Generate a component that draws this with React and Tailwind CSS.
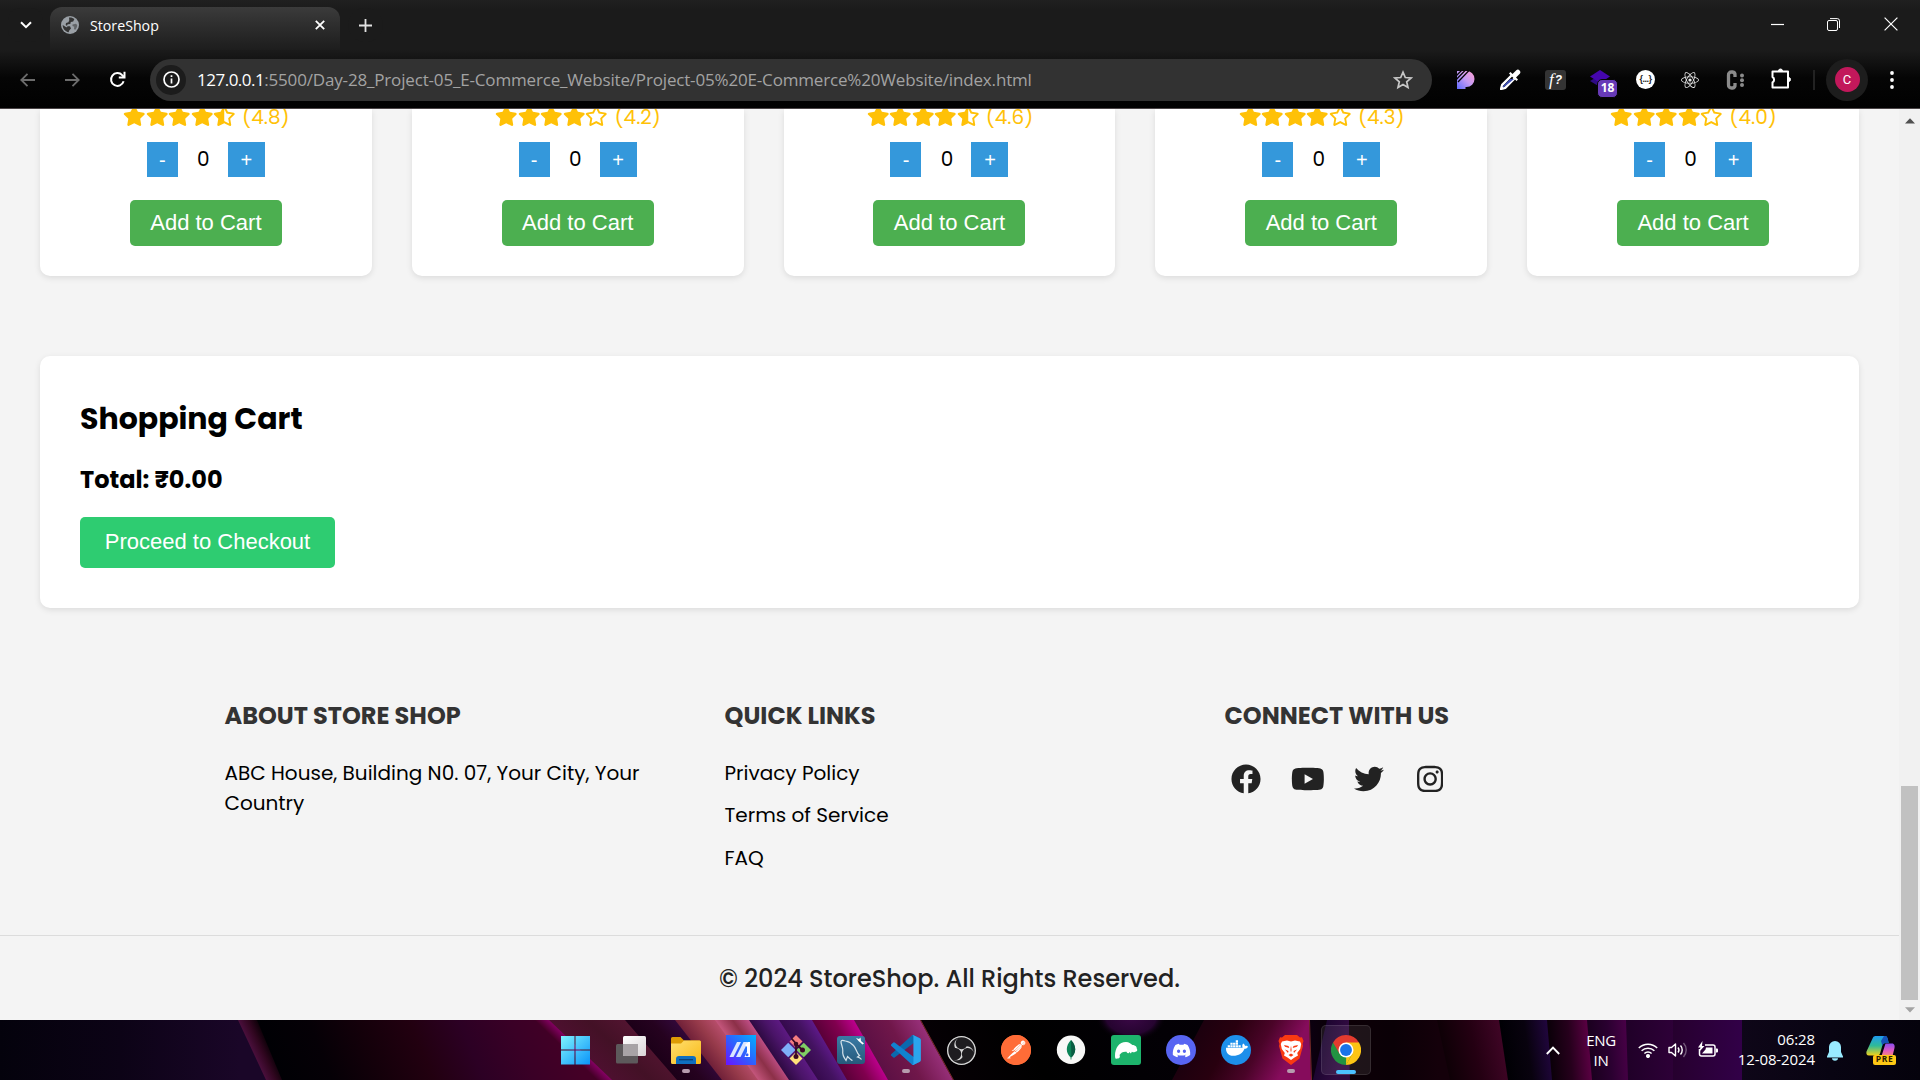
import React from "react";
import {
  FaStar,
  FaStarHalfAlt,
  FaRegStar,
  FaFacebook,
  FaYoutube,
  FaTwitter,
  FaInstagram,
  FaDiscord,
  FaDocker,
  FaReact,
} from "react-icons/fa";
import { SiPostman, SiObsstudio } from "react-icons/si";

/* ---------------------------------------------------------------- browser */

function TabStrip() {
  return (
    <div className="flex h-[50px] items-start pl-2">
      <div className="mt-2 flex h-[34px] w-[35px] items-center justify-center rounded-[12px] bg-[#1b1b1b]">
        <svg width="12" height="8" viewBox="0 0 12 8" fill="none" stroke="#fff" strokeWidth="2">
          <path d="M1 1.2l5 5 5-5" />
        </svg>
      </div>
      <div className="ml-[7px] mt-[7px] flex h-[43px] w-[290px] items-center rounded-t-[12px] bg-gradient-to-b from-[#3b3b3b] to-[#1d1d1d] pb-[7px] pl-[11px] pr-[15px]">
        <svg width="18" height="18" viewBox="0 0 18 18">
          <circle cx="9" cy="9" r="9" fill="#9aa0a6" />
          <path
            d="M8 1.6c2-.3 4 .3 5.400 1.500l-1.200 2.400-2.400.6-.5 2 -2.600.2-.9 1.700 3.200.3 1 2.200-1.800 1.900-.5 1.900C4 15.500 1.700 12.600 1.700 9l3.600 2.200 1.300-.2L4.600 8.600l.5-1.700 2.300-.7.9-2z"
            fill="#343434"
          />
          <path d="M11.500 8.400l3.400-.7 1.300 1.300c0 2-.8 3.800-2.200 5.100l-1-1.300.3-2-1.800-.8z" fill="#343434" opacity=".55" />
        </svg>
        <span className="ml-[11px] flex-1 whitespace-nowrap pt-px text-[14.200px] leading-5 text-white">StoreShop</span>
        <svg width="10" height="10" viewBox="0 0 10 10" stroke="#fff" strokeWidth="1.8">
          <path d="M.8.8l8.400 8.400M9.200.8L.8 9.200" />
        </svg>
      </div>
      <div className="ml-[8px] mt-2 flex h-[34px] w-[35px] items-center justify-center rounded-full bg-[#1b1b1b]">
        <svg width="13" height="13" viewBox="0 0 13 13" stroke="#e3e3e3" strokeWidth="1.800">
          <path d="M6.500 0v13M0 6.500h13" />
        </svg>
      </div>
      <div className="ml-auto mr-[22px] flex h-12 items-center gap-[43px]">
        <svg width="14" height="14" viewBox="0 0 14 14" stroke="#fff" strokeWidth="1.200">
          <path d="M0 7.500h13" />
        </svg>
        <svg className="-ml-px" width="13" height="13" viewBox="0 0 13 13" fill="none" stroke="#fff">
          <rect x=".5" y="2.500" width="10" height="10" rx="1.500" />
          <path d="M3 .6h7.300a2.200 2.200 0 0 1 2.200 2.200V10" />
        </svg>
        <svg className="ml-px" width="14" height="14" viewBox="0 0 14 14" stroke="#fff" strokeWidth="1.200">
          <path d="M.6.6l12.800 12.800M13.400.6L.6 13.400" />
        </svg>
      </div>
    </div>
  );
}

function Extensions() {
  return (
    <div className="flex items-center">
      <svg className="ml-[25px]" width="18" height="18" viewBox="0 0 18 18">
        <defs>
          <linearGradient id="pp" x1="1" y1="0" x2="0" y2="1">
            <stop offset="0" stopColor="#ff9fd0" />
            <stop offset=".5" stopColor="#c39af5" />
            <stop offset="1" stopColor="#5f6bff" />
          </linearGradient>
        </defs>
        <path d="M0 0h9.500a8 8 0 0 1 0 16H8.500v2H0z" fill="url(#pp)" />
        <path d="M-.5 4.500L5 -1M-.5 8.300L8.500 -1M1 11L12 -.5" stroke="#050505" strokeWidth="1.300" />
      </svg>
      <svg className="ml-[25px]" width="21" height="21" viewBox="0 0 21 21">
        <path d="M11.500 6.500L2.200 15.800 1 20l4.200-1.200 9.300-9.300" fill="none" stroke="#fff" strokeWidth="2.400" strokeLinejoin="round" />
        <path d="M3.500 18.500l-1-1L10 10h4z" fill="#3f51b5" />
        <path d="M9 4.500l7.500 7.500 1.500-1.500-2-2 3.800-3.800a2.500 2.500 0 0 0-3.500-3.500L12.500 5l-2-2z" fill="#fff" />
      </svg>
      <div className="ml-[24px] flex h-5 w-[21px] items-center justify-center rounded-[3px] bg-[#343434] font-['Liberation_Serif',serif] text-[17px] italic leading-5 text-white">
        <span>f</span>
        <span className="ml-px font-['Liberation_Sans',sans-serif] text-[12px] font-bold">?</span>
      </div>
      <div className="relative ml-[24px] h-[30px] w-[28px]">
        <svg className="mt-[5px]" width="20" height="17" viewBox="0 0 20 17">
          <path d="M10 5l10 6-10 6-10-6z" fill="#2f0a86" />
          <path d="M10 0l10 6.500L10 13 0 6.500z" fill="#4506ad" />
        </svg>
        <span className="absolute left-[7px] top-[14px] flex h-[19px] w-[21px] items-center justify-center rounded-[5px] border border-[#050505] bg-[#673ab7] text-[12px] font-bold leading-none text-white">
          18
        </span>
      </div>
      <div className="ml-[18px] flex h-[19px] w-[19px] items-center justify-center rounded-full bg-white">
        <span className="font-['Liberation_Sans',sans-serif] text-[9px] font-bold leading-none tracking-[-0.500px] text-[#222]">{"{...}"}</span>
      </div>
      <FaReact className="ml-[26px] h-[18px] w-[18px] text-[#e8e8e8]" />
      <svg className="ml-[27px]" width="19" height="20" viewBox="0 0 19 20">
        <path d="M9 7V5.200A3 3 0 0 0 6.500 2h-1A3 3 0 0 0 2.500 5.200v9.600A3 3 0 0 0 5.500 18h1A3 3 0 0 0 9 14.800V13" fill="none" stroke="#8b8b8b" strokeWidth="3.300" />
        <g fill="#8b8b8b">
          <circle cx="16" cy="5.500" r="2" />
          <circle cx="16" cy="10.300" r="2" />
          <circle cx="16" cy="15" r="2" />
        </g>
      </svg>
      <svg className="-mt-[2px] ml-[26px]" width="21" height="21" viewBox="0 0 21 21" fill="none" stroke="#fff" strokeWidth="2" strokeLinejoin="round">
        <path d="M1.500 3.500h15.500v16H1.500v-5.200a3 3 0 0 0 0-5.300z" />
        <path d="M7.500 3a2 2 0 0 1 4 0zM17.500 9.500a2 2 0 0 1 0 4z" fill="#fff" strokeWidth="1" />
      </svg>
      <div className="ml-[21px] h-5 w-[2px] bg-[#222]" />
      <div className="ml-[11px] flex h-[42px] w-[42px] items-center justify-center rounded-full bg-[#1d1d1d]">
        <div className="flex h-[25px] w-[25px] items-center justify-center rounded-full bg-[#c2185b] font-[Roboto,sans-serif] text-[13px] leading-none text-white">
          C
        </div>
      </div>
      <svg className="ml-[22px]" width="4" height="18" viewBox="0 0 4 18" fill="#fff">
        <circle cx="2" cy="2" r="1.900" />
        <circle cx="2" cy="9" r="1.900" />
        <circle cx="2" cy="16" r="1.900" />
      </svg>
    </div>
  );
}

function Toolbar() {
  return (
    <div className="flex h-[58px] items-center border-b border-[#4a4446] pl-5">
      <svg width="15" height="14" viewBox="0 0 15 14" fill="none" stroke="#6c6c6c" strokeWidth="1.800">
        <path d="M15 7H1.500M7.500.8L1.300 7l6.200 6.200" />
      </svg>
      <svg className="ml-[30px]" width="15" height="14" viewBox="0 0 15 14" fill="none" stroke="#6c6c6c" strokeWidth="1.800">
        <path d="M0 7h13.500M7.500.8L13.700 7l-6.200 6.200" />
      </svg>
      <svg className="ml-[29px]" width="17" height="17" viewBox="0 0 17 17" fill="none" stroke="#fff" strokeWidth="2">
        <path d="M14.600 10.300A6.400 6.400 0 1 1 13.200 4.200L15 6" />
        <path d="M15.500.8v5.700H9.800" />
      </svg>
      <div className="ml-[24px] flex h-[42px] w-[1282px] items-center rounded-full bg-[#323232] pl-[6px] pr-[19px]">
        <div className="flex h-[30px] w-[30px] items-center justify-center rounded-full bg-[#1c1c1c]">
          <svg width="17" height="17" viewBox="0 0 17 17" fill="none" stroke="#fff" strokeWidth="1.700">
            <circle cx="8.500" cy="8.500" r="7.500" />
            <path d="M8.500 7.500v5M8.500 4.300v1.800" />
          </svg>
        </div>
        <div className="ml-[11px] flex-1 whitespace-nowrap text-[17px] leading-6 tracking-[-0.168px] text-[#a3a3a3]">
          <span className="tracking-[-0.500px] text-white">127.0.0.1</span>
          :5500/Day-28_Project-05_E-Commerce_Website/Project-05%20E-Commerce%20Website/index.html
        </div>
        <svg width="20" height="20" viewBox="0 0 20 20" fill="none" stroke="#c7c7c7" strokeWidth="1.700">
          <path d="M10 2.200l2.300 5.300 5.800.5-4.400 3.800 1.300 5.700-5-3-5 3 1.300-5.700L1.900 8l5.800-.5z" />
        </svg>
      </div>
      <Extensions />
    </div>
  );
}

/* ------------------------------------------------------------------- page */

const products = [
  { rating: "4.8", half: true },
  { rating: "4.2", half: false },
  { rating: "4.6", half: true },
  { rating: "4.3", half: false },
  { rating: "4.0", half: false },
];

const star = "h-5 w-[22.500px]";
const qtyButton = "h-[35px] bg-[#3498db] font-['Liberation_Sans',Arial,sans-serif] text-[20px] leading-none text-white";

function ProductCard({ rating, half }) {
  const Last = half ? FaStarHalfAlt : FaRegStar;
  return (
    <div className="flex flex-1 flex-col items-center rounded-b-[10px] bg-white pb-[30px] shadow-[0_2px_6px_rgba(0,0,0,0.100)]">
      <div className="-mt-[8px] flex h-[30px] items-center pl-px text-[20px] leading-[30px] text-[#ffc107]">
        <FaStar className={star} />
        <FaStar className={star} />
        <FaStar className={star} />
        <FaStar className={star} />
        <Last className={star} />
        <span className="ml-[6.500px] pt-px">({rating})</span>
      </div>
      <div className="mt-[11px] flex h-[35px] items-center text-[20px] leading-[30px]">
        <button className={`${qtyButton} w-[31px]`}>-</button>
        <span className="w-[50px] pb-[2px] pl-px text-center">0</span>
        <button className={`${qtyButton} w-[37px]`}>+</button>
      </div>
      <button className="mt-[23px] h-[46px] w-[152px] rounded-[5px] bg-[#4caf50] font-['Liberation_Sans',Arial,sans-serif] text-[22px] leading-none text-white">
        Add to Cart
      </button>
    </div>
  );
}

function Cart() {
  return (
    <section className="mx-10 mt-20 h-[252px] rounded-[10px] bg-white p-10 shadow-[0_2px_6px_rgba(0,0,0,0.100)]">
      <h2 className="text-[30px] font-bold leading-[45px]">Shopping Cart</h2>
      <h3 className="mt-5 text-[24px] font-bold leading-[37px]">Total: ₹0.00</h3>
      <button className="mt-[19px] block h-[51px] w-[255px] rounded-[5px] bg-[#2ecc71] pb-px font-['Liberation_Sans',Arial,sans-serif] text-[22px] leading-none text-white">
        Proceed to Checkout
      </button>
    </section>
  );
}

function Footer() {
  const heading = "text-[24px] font-bold leading-9 text-[#333]";
  return (
    <footer className="mt-[90px]">
      <div className="ml-[224.500px] grid h-[237px] w-[1460px] grid-cols-3 gap-x-10 text-[20px] leading-[30px]">
        <div>
          <h3 className={heading}>ABOUT STORE SHOP</h3>
          <p className="mt-[24px]">ABC House, Building N0. 07, Your City, Your Country</p>
        </div>
        <div>
          <h3 className={heading}>QUICK LINKS</h3>
          <ul className="mt-[24px] flex flex-col">
            <li>Privacy Policy</li>
            <li className="mt-3">Terms of Service</li>
            <li className="mt-[13px]">FAQ</li>
          </ul>
        </div>
        <div>
          <h3 className={heading}>CONNECT WITH US</h3>
          <div className="ml-[6.500px] mt-[30px] flex items-center text-[#222]">
            <FaFacebook className="h-[30px] w-[30px]" />
            <FaYoutube className="ml-[29.500px] h-[30px] w-[33.750px]" />
            <FaTwitter className="ml-[29.500px] h-[30px] w-[30px]" />
            <FaInstagram className="ml-[33px] h-[30px] w-[26.250px]" />
          </div>
        </div>
      </div>
      <div className="h-[85px] border-t border-[#dcdcdc] text-center text-[24px] font-medium leading-[86px] text-[#222]">
        © 2024 StoreShop. All Rights Reserved.
      </div>
    </footer>
  );
}

function Scrollbar() {
  return (
    <div className="flex h-[911px] w-[21px] flex-col items-center bg-[#f1f1f1]">
      <svg className="mt-[9px]" width="10" height="6" viewBox="0 0 10 6">
        <path d="M5 .2L10 5.500H0z" fill="#505050" />
      </svg>
      <div className="mt-[662px] h-[214px] w-[17px] bg-[#c1c1c1]" />
      <svg className="mt-[7px]" width="10" height="6" viewBox="0 0 10 6">
        <path d="M0 .3h10L5 5.600z" fill="#a3a3a3" />
      </svg>
    </div>
  );
}

/* ---------------------------------------------------------------- taskbar */

// Each band: left edge (top, bottom), right edge (top, bottom), colour stops.
const bands = [
  [0, 0, 240, 268, ["#04020c", "#0c0316", "#1a0628"]],
  [238, 266, 258, 283, ["#4a0f3c", "#30061f", "#0a0006"]],
  [257, 282, 560, 620, ["#000004", "#050006", "#14000a", "#220010", "#2c0024", "#3a0026", "#440026"]],
  [535, 597, 551, 614, ["#440026", "#8a0068"]],
  [549, 612, 626, 678, ["#4d102f", "#431126", "#521430"]],
  [625, 677, 676, 723, ["#1c0018", "#25021f", "#32083a"]],
  [675, 722, 716, 759, ["#702038", "#963a4a", "#b84e6c"]],
  [715, 758, 750, 790, ["#c4567c", "#8c3048", "#c2508a"]],
  [749, 789, 780, 819, ["#2e0a42", "#4a1468", "#5e1a84"]],
  [779, 818, 813, 848, ["#350a4c", "#431260", "#601a8c"]],
  [812, 847, 855, 889, ["#5a0038", "#80004e", "#c00090"]],
  [854, 888, 921, 954, ["#5c1044", "#70174a", "#98307a"]],
  [920, 953, 1206, 1173, ["#050004", "#000000", "#020004", "#040006"]],
  [1204, 1172, 1310, 1312, ["#1c000e", "#28000f", "#4a0428", "#860c5c"]],
  [1309, 1311, 1328, 1314, ["#0c0010", "#0a0008"]],
  [1327, 1313, 1349, 1350, ["#1c0530", "#300a40"]],
  [1349, 1350, 1438, 1451, ["#0c0006", "#0a0006", "#14000a"]],
  [1437, 1450, 1500, 1509, ["#0e0006", "#240012", "#400526"]],
  [1499, 1508, 1548, 1553, ["#000004", "#08020e", "#220640"]],
  [1547, 1552, 1588, 1593, ["#0a0008", "#26001c", "#5c0044"]],
  [1587, 1592, 1627, 1629, ["#1a001e", "#2a0030", "#4a0048"]],
  [1626, 1628, 1674, 1674, ["#200028", "#2e0038"]],
  [1673, 1673, 1743, 1743, ["#26002e", "#320048"]],
  [1742, 1742, 1920, 1920, ["#0e0618", "#080412", "#05020c"]],
];

function Wallpaper() {
  return (
    <svg className="absolute inset-0" width="1920" height="60" viewBox="0 0 1920 60">
      <defs>
        {bands.map(([a, b, c, , stops], i) => (
          <linearGradient key={i} id={`band${i}`} gradientUnits="userSpaceOnUse" x1={a} x2={c} y1="0" y2="0" gradientTransform={`matrix(1 0 ${(b - a) / 60} 1 0 0)`}>
            {stops.map((s, j) => (
              <stop key={j} offset={j / (stops.length - 1)} stopColor={s} />
            ))}
          </linearGradient>
        ))}
        <radialGradient id="glow">
          <stop offset="0" stopColor="#3c0848" />
          <stop offset=".7" stopColor="#260430" />
          <stop offset="1" stopColor="#000" stopOpacity="0" />
        </radialGradient>
      </defs>
      {bands.map(([a, b, c, d], i) => (
        <path key={i} d={`M${a} 0H${c}L${d} 60H${b}z`} fill={`url(#band${i})`} />
      ))}
      <ellipse cx="1131" cy="-4" rx="36" ry="26" fill="url(#glow)" />
      <path d="M920.500 0l33 60M1309.500 0l2 60" stroke="#a03a30" strokeWidth="1" opacity=".7" />
    </svg>
  );
}

function WindowsIcon() {
  return (
    <svg className="-ml-[3px]" width="30" height="30" viewBox="0 0 30 30">
      <defs>
        <linearGradient id="win" x1="0" y1="0" x2="1" y2="1">
          <stop offset="0" stopColor="#7ff3ff" />
          <stop offset="1" stopColor="#0a94f8" />
        </linearGradient>
      </defs>
      <path d="M1 1h13.500v13.500H1zM15.500 1H30v13.500H15.500zM1 15.500h13.500V29.500H1zM15.500 15.500H30v14H15.500z" fill="url(#win)" />
    </svg>
  );
}

function TaskViewIcon() {
  return (
    <svg width="30" height="30" viewBox="0 0 30 30">
      <defs>
        <linearGradient id="tv" x1="0" y1="0" x2="1" y2="1">
          <stop offset="0" stopColor="#fff" />
          <stop offset="1" stopColor="#d9d4d6" />
        </linearGradient>
      </defs>
      <rect x="0" y="9" width="22" height="19.500" rx="1.500" fill="#5d595b" />
      <rect x="7" y="1" width="23" height="20" rx="1.500" fill="url(#tv)" />
      <path d="M7 9h15v12H8.500A1.500 1.500 0 0 1 7 19.500z" fill="#a8a3a6" />
    </svg>
  );
}

function ExplorerIcon() {
  return (
    <svg width="30" height="30" viewBox="0 0 30 30">
      <defs>
        <linearGradient id="fold" x1="0" y1="0" x2="1" y2="1">
          <stop offset="0" stopColor="#ffdf70" />
          <stop offset="1" stopColor="#f9b916" />
        </linearGradient>
      </defs>
      <path d="M0 3.500A1.500 1.500 0 0 1 1.500 2h8l3.500 3.500h15.500A1.500 1.500 0 0 1 30 7v9H0z" fill="#dd9b05" />
      <path d="M0 8.500h10l3-3h15.500A1.500 1.500 0 0 1 30 7v20.500a1.500 1.500 0 0 1-1.500 1.500h-27A1.500 1.500 0 0 1 0 27.500z" fill="url(#fold)" />
      <path d="M5 29v-5a3 3 0 0 1 3-3h14a3 3 0 0 1 3 3v5z" fill="#0f6fc0" />
      <path d="M8 24.700h14" stroke="#0b3f75" strokeWidth="1.300" />
    </svg>
  );
}

function MyAsusIcon() {
  return (
    <svg width="30" height="30" viewBox="0 0 30 30">
      <defs>
        <linearGradient id="asus" x1="0" y1="1" x2="1" y2="0">
          <stop offset="0" stopColor="#6a12ff" />
          <stop offset=".5" stopColor="#2c62ff" />
          <stop offset="1" stopColor="#00b2ff" />
        </linearGradient>
      </defs>
      <rect width="30" height="30" fill="url(#asus)" />
      <path d="M3.500 22L11 7h4L7.500 22zM10 22L17.500 7h4.500L14.500 22z" fill="#d9e6ff" />
      <path d="M19 10l3-3h2v15h-5.500l2-4.500h.500V12z" fill="#fff" />
      <circle cx="21" cy="19.700" r="1.500" fill="#2c62ff" />
    </svg>
  );
}

function GitIcon() {
  return (
    <svg width="30" height="30" viewBox="0 0 30 30">
      <path d="M15 0l6.500 6.500L15 13 8.500 6.500z" fill="#f47d80" />
      <path d="M7.200 7.800L14 14.500v1L7.200 22.200 0 15z" fill="#7eaef8" />
      <path d="M22.800 7.800L30 15l-7.200 7.200L16 15.500v-1z" fill="#80cf64" />
      <path d="M15 17l6.500 6.500L15 30l-6.500-6.500z" fill="#ffe07a" />
      <path d="M10.500 3.500l4.500 5v13M15 9l6.500 6" stroke="#3c0a24" strokeWidth="1.800" fill="none" />
      <circle cx="15" cy="9" r="2.300" fill="#3c0a24" />
      <circle cx="21.500" cy="15" r="2.500" fill="#3c0a24" />
      <circle cx="15" cy="21.500" r="2.500" fill="#3c0a24" />
    </svg>
  );
}

function WorkbenchIcon() {
  return (
    <svg width="30" height="30" viewBox="0 0 30 30">
      <defs>
        <linearGradient id="wb" x1="0" y1="0" x2="0" y2="1">
          <stop offset="0" stopColor="#3a7ba5" />
          <stop offset="1" stopColor="#265a7c" />
        </linearGradient>
      </defs>
      <rect x="1" y="1" width="28" height="28" rx="3" fill="url(#wb)" />
      <path
        d="M25.500 24.500c-1.500-2-3-2.200-4-2.500l2-1.500c-3-2-3-7-6-10-2-2.300-4.500-4-8-4.500-2.500-.8-4.200-1-4.500.5 0 3 2 6 1.800 9-.5 3 1 7 3.200 10l1.500-4c2 2 3.500 3.500 5 4"
        fill="none"
        stroke="#d4e2ea"
        strokeWidth="1.200"
      />
      <path d="M20 3l3 1 1.500-1.500.5 3.500 3 2.500-1.500 1-4-3.500z" fill="#fff" />
    </svg>
  );
}

function VsCodeIcon() {
  return (
    <svg width="30" height="30" viewBox="0 0 100 100">
      <path d="M96 11L75.500 1a6 6 0 0 0-7 1.200L1.300 63.500a4 4 0 0 0 0 6l5.500 5a4 4 0 0 0 5.300.2l81-61.400c2.700-2 6.900-.1 6.900 3.300v-.2A6.200 6.200 0 0 0 96 11z" fill="#0a69ae" />
      <path d="M96 89L75.500 99a6 6 0 0 1-7-1.200L1.300 36.500a4 4 0 0 1 0-6l5.500-5a4 4 0 0 1 5.300-.2l81 61.400c2.700 2 6.900.1 6.900-3.300v.2A6.200 6.200 0 0 1 96 89z" fill="#1182cf" />
      <path d="M75.500 99a6.200 6.200 0 0 1-7-1.200c2.300 2.300 6.200.7 6.200-2.600V4.800c0-3.300-3.900-4.900-6.200-2.600a6.200 6.200 0 0 1 7-1.200l20.600 9.900a6.200 6.200 0 0 1 3.500 5.600v67a6.200 6.200 0 0 1-3.500 5.600z" fill="#2ba5ee" />
    </svg>
  );
}

function ObsIcon() {
  return (
    <div className="flex h-[29px] w-[29px] items-center justify-center rounded-full bg-[#1f1d20]">
      <SiObsstudio className="h-[29px] w-[29px] text-[#d8d8d8]" />
    </div>
  );
}

function PostmanIcon() {
  return (
    <div className="flex h-[30px] w-[30px] items-center justify-center rounded-full bg-[#ff6c37]">
      <div className="flex h-[28px] w-[28px] items-center justify-center rounded-full bg-white">
        <SiPostman className="h-[30px] w-[30px] shrink-0 text-[#ff6c37]" />
      </div>
    </div>
  );
}

function CompassIcon() {
  return (
    <svg width="30" height="30" viewBox="0 0 30 30">
      <circle cx="15" cy="14.800" r="14.200" fill="#f8f8f7" />
      <path d="M15 5c2.800 3 4.200 6 4.200 9.300 0 3.500-1.500 6-3.800 8.200v2h-.8v-2c-2.300-2.200-3.800-4.700-3.800-8.200C10.800 11 12.200 8 15 5z" fill="#0c8457" />
      <path d="M15 5c2.800 3 4.200 6 4.200 9.300 0 3.500-1.500 6-3.800 8.200z" fill="#0a5c42" />
    </svg>
  );
}

function ManateeIcon() {
  return (
    <svg width="30" height="30" viewBox="0 0 30 30">
      <rect width="30" height="30" rx="3" fill="#1db36c" />
      <path
        d="M4 21C4 13 8 7 15 7c3 0 4.500 1.500 6.500 3 2.200.1 4.500 1.500 4.300 3.700.8.8.6 2.800-.9 2.800-1 1.200-2.800.8-4 .2l-1 1.800-1.500-1.500c-.3 1.500-2.500 1.800-2.800-.2-3-.5-5.600.7-7.100 3.200 1.200 2-.5 4-2.500 3.500-.8.800-2 .3-2-2.500z"
        fill="#fff"
      />
    </svg>
  );
}

function DiscordIcon() {
  return (
    <div className="flex h-[30px] w-[30px] items-center justify-center rounded-full bg-[#5865f2]">
      <FaDiscord className="h-[19px] w-[19px] text-white" />
    </div>
  );
}

function DockerIcon() {
  return (
    <div className="flex h-[30px] w-[30px] items-center justify-center rounded-full bg-[#1d8fea]">
      <FaDocker className="-mt-1 ml-px h-[24px] w-[22px] text-white" />
    </div>
  );
}

function BraveIcon() {
  return (
    <svg width="30" height="30" viewBox="0 0 30 30">
      <path d="M9 0h12l3 2.500 2-.2L27.500 6l-1 3 .5 2-3.500 12.500L15 30l-8.500-6.500L3 11l.5-2-1-3L4 2.300l2 .2z" fill="#f93a12" />
      <path
        d="M6 6.500l5-1 4 1 4-1 5 1 1.200 2.500-1 5-3 4 .8 2.500-3.500 2L15 25l-3.500-2.500-3.500-2 .8-2.500-3-4-1-5z"
        fill="#fff"
      />
      <path d="M8 10l4.500 1 .8 2L9 11.800zM22 10l-4.500 1-.8 2 4.300-1.200zM15 10.500l.6 4.500-.6 2.500-.6-2.500zM9 14.500l3.500 1.500-.5 2zM21 14.500L17.500 16l.5 2zM12.500 20l2.500-1.500 2.500 1.500-2.500 1.800z" fill="#f93a12" />
    </svg>
  );
}

function ChromeIcon() {
  return (
    <svg width="30" height="30" viewBox="0 0 48 48">
      <path d="M24 24L3.215 12A24 24 0 0 1 44.785 12z" fill="#e33b2e" />
      <path d="M24 24l20.785-12A24 24 0 0 1 24 48z" fill="#fcc414" />
      <path d="M24 24L3.215 12A24 24 0 0 0 24 48z" fill="#229342" />
      <path d="M3.215 12L13.600 30 24 24zM24 48l10.400-18L24 24z" fill="#229342" />
      <path d="M24 12h20.785L34.400 30 24 24z" fill="#fcc414" />
      <path d="M3.215 12L24 12v12L13.600 30z" fill="#e33b2e" />
      <path d="M24 48l10.400-18-10 2z" fill="#fcc414" />
      <circle cx="24" cy="24" r="12" fill="#fff" />
      <circle cx="24" cy="24" r="9.500" fill="#1a73e8" />
    </svg>
  );
}

const apps = [
  { name: "start", Icon: WindowsIcon },
  { name: "tasks", Icon: TaskViewIcon },
  { name: "explorer", Icon: ExplorerIcon, open: true },
  { name: "myasus", Icon: MyAsusIcon },
  { name: "git", Icon: GitIcon },
  { name: "workbench", Icon: WorkbenchIcon },
  { name: "vscode", Icon: VsCodeIcon, open: true },
  { name: "obs", Icon: ObsIcon },
  { name: "postman", Icon: PostmanIcon },
  { name: "compass", Icon: CompassIcon },
  { name: "manatee", Icon: ManateeIcon },
  { name: "discord", Icon: DiscordIcon },
  { name: "docker", Icon: DockerIcon },
  { name: "brave", Icon: BraveIcon, open: true },
  { name: "chrome", Icon: ChromeIcon, active: true },
];

function SystemTray() {
  return (
    <div className="ml-auto flex h-[60px] items-center pr-[24px] text-[15px] leading-5 text-white">
      <svg width="14" height="9" viewBox="0 0 14 9" fill="none" stroke="#fff" strokeWidth="1.900">
        <path d="M.8 8L7 1.700 13.200 8" />
      </svg>
      <div className="ml-[24px] w-[34px] text-center tracking-[-0.300px]">
        <div>ENG</div>
        <div>IN</div>
      </div>
      <svg className="ml-[20px]" width="20" height="16" viewBox="0 0 20 16" fill="none" stroke="#fff" strokeWidth="1.500">
        <path d="M.8 6a13 13 0 0 1 18.400 0M3.600 8.800a9 9 0 0 1 12.800 0M6.400 11.600a5 5 0 0 1 7.200 0" />
        <circle cx="10" cy="14" r="1.300" fill="#fff" />
      </svg>
      <svg className="ml-[10px]" width="20" height="18" viewBox="0 0 20 18" fill="none" stroke="#fff" strokeWidth="1.400">
        <path d="M1 6.500h2.500L7.500 3v12l-4-3.500H1z" strokeLinejoin="round" />
        <path d="M10 6.500c1.200 1.500 1.200 3.500 0 5M12.500 4.500c2.300 2.500 2.300 6.500 0 9" />
        <path d="M15.500 2c3.600 4 3.600 10 0 14" opacity=".35" />
      </svg>
      <svg className="ml-[10px]" width="20" height="18" viewBox="0 0 20 18">
        <path d="M7 4h8a2 2 0 0 1 2 2v7a2 2 0 0 1-2 2H3.500a2 2 0 0 1-2-2V8" fill="none" stroke="#fff" strokeWidth="1.500" />
        <path d="M18 7.500h1a1 1 0 0 1 1 1v2a1 1 0 0 1-1 1h-1z" fill="#fff" />
        <path d="M8 6.500h6.500v6H4L7.500 8.500z" fill="#fff" />
        <path d="M4.500 0L0 6.500h2.500L1 11l5.500-6H4z" fill="#fff" />
      </svg>
      <div className="ml-[19px] mr-px w-[78px] whitespace-nowrap pb-[2px] text-right tracking-[-0.100px]">
        <div>06:28</div>
        <div>12-08-2024</div>
      </div>
      <svg className="ml-[11px] mt-[2px]" width="16" height="20" viewBox="0 0 16 20" fill="#99ebff">
        <path d="M8 0a6 6 0 0 1 6 6v5l2 4.500v1H0v-1L2 11V6a6 6 0 0 1 6-6zM5 17.300h6a3 2.400 0 0 1-6 0z" />
      </svg>
      <div className="relative ml-[23px] h-[29px] w-[30px]">
        <svg width="30" height="24" viewBox="0 0 30 24">
          <defs>
            <linearGradient id="cpA" x1="0" y1="0" x2="0" y2="1">
              <stop offset="0" stopColor="#1f9bf0" />
              <stop offset=".5" stopColor="#2fbb98" />
              <stop offset="1" stopColor="#f2d21a" />
            </linearGradient>
            <linearGradient id="cpB" x1="0" y1="0" x2="0" y2="1">
              <stop offset="0" stopColor="#8a4df0" />
              <stop offset=".5" stopColor="#e25ac0" />
              <stop offset="1" stopColor="#ff9a5a" />
            </linearGradient>
          </defs>
          <path d="M7 1.500C7.500.500 8.500 0 10 0h9c2 0 2.500 2 3 4l.7 3h-3c-2 0-3 .8-3.500 3l-2 7c-.6 2-1.500 2.500-3.200 2.500H3C.500 19.500 0 17.500.500 15.500z" fill="url(#cpA)" />
          <path d="M18 0h1.500c1.500 0 2 2 2.500 4l.7 3h-3.200c-1.500 0-2.500.800-3 3L15 5z" fill="#1552b8" />
          <path d="M19.500 7.500H26c2.500 0 3 2.500 2.500 4.500L26 22H13.500c1.500-.500 2-1.500 2.500-3.500z" fill="url(#cpB)" />
        </svg>
        <span className="absolute bottom-0 left-[7px] flex h-[10px] w-[23px] items-center justify-center rounded-[2px] bg-[#ffc814] text-[8.500px] font-bold leading-none tracking-[0.600px] text-[#2a1c00]">
          PRE
        </span>
      </div>
    </div>
  );
}

function Taskbar() {
  return (
    <div className="relative h-[60px] overflow-hidden bg-black">
      <Wallpaper />
      <div className="relative flex h-[60px] items-center pl-[548.500px]">
        {apps.map(({ name, Icon, open, active }) => (
          <div key={name} className="flex h-[60px] w-[55px] items-center justify-center">
            <div
              className={
                active
                  ? "relative flex h-[50px] w-[50px] items-center justify-center rounded-[5px] border border-white/10 bg-white/8"
                  : "relative flex h-[50px] w-[50px] items-center justify-center"
              }
            >
              <Icon />
              {open && <div className="absolute bottom-[2px] h-1 w-2 rounded-full bg-[#b79bae]" />}
              {active && <div className="absolute bottom-0 h-1 w-5 rounded-full bg-[#4cc2ff]" />}
            </div>
          </div>
        ))}
        <SystemTray />
      </div>
    </div>
  );
}

export default function App() {
  return (
    <div className="h-[1080px] w-[1920px] overflow-hidden bg-[#f4f4f4] font-['Open_Sans','Noto_Sans',sans-serif]">
      <header className="h-[109px] bg-[linear-gradient(#202020_0px,#1b1b1b_10px,#1b1b1b_50px,#050505_78px,#010101_109px)]">
        <TabStrip />
        <div className="h-[59px] pt-px">
          <Toolbar />
        </div>
      </header>
      <div className="flex h-[911px] overflow-hidden">
        <main className="w-[1899px] font-[Poppins,Inter,sans-serif] text-black">
          <div className="flex gap-10 px-10">
            {products.map((p) => (
              <ProductCard key={p.rating} {...p} />
            ))}
          </div>
          <Cart />
          <Footer />
        </main>
        <Scrollbar />
      </div>
      <Taskbar />
    </div>
  );
}
